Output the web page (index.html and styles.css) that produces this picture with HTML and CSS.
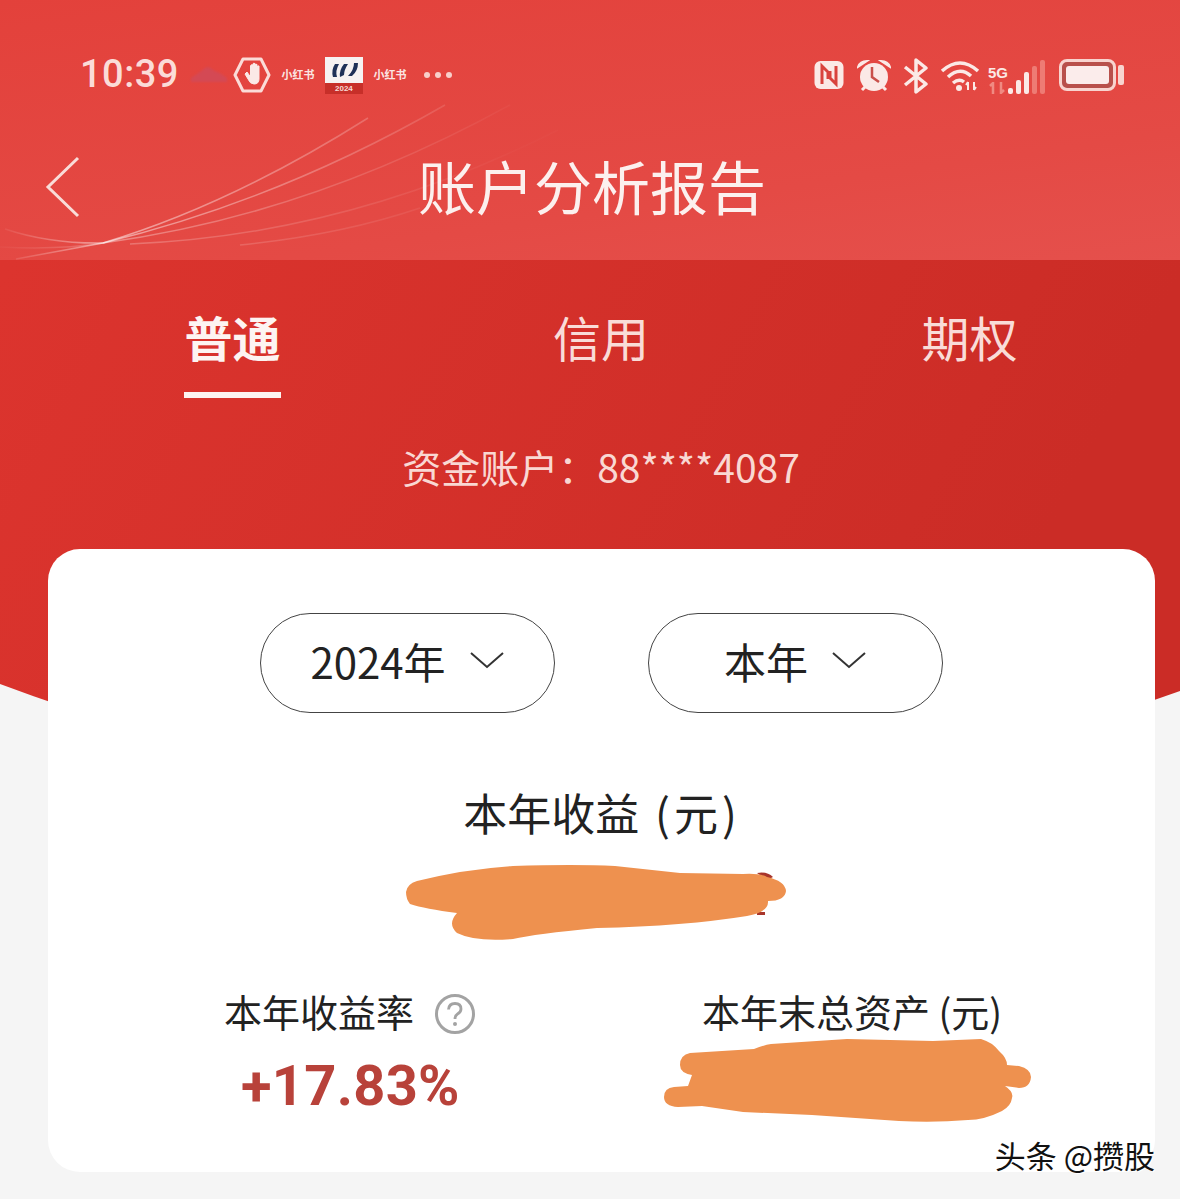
FILE: index.html
```html
<!DOCTYPE html>
<html lang="zh">
<head>
<meta charset="utf-8">
<title>账户分析报告</title>
<link rel="stylesheet" href="styles.css">
</head>
<body>
<div class="page">
  <svg class="hero-bg" viewBox="0 0 1180 800" width="1180" height="800" aria-hidden="true">
    <defs>
      <linearGradient id="heroGrad" x1="0" y1="0" x2="1" y2="0.35">
        <stop offset="0" stop-color="#de352f"/>
        <stop offset="1" stop-color="#cb2c26"/>
      </linearGradient>
    </defs>
    <path d="M0 684Q590 905 1180 691V0H0Z" fill="url(#heroGrad)"/>
  </svg>

  <header class="appbar">
    <svg class="swoosh" viewBox="0 0 1180 260" width="1180" height="260" aria-hidden="true">
      <defs>
        <linearGradient id="fadeR" gradientUnits="userSpaceOnUse" x1="60" y1="0" x2="520" y2="0">
          <stop offset="0" stop-color="#fff" stop-opacity=".55"/>
          <stop offset=".45" stop-color="#fff" stop-opacity=".32"/>
          <stop offset="1" stop-color="#fff" stop-opacity=".03"/>
        </linearGradient>
        <linearGradient id="fadeL" gradientUnits="userSpaceOnUse" x1="0" y1="0" x2="110" y2="0">
          <stop offset="0" stop-color="#fff" stop-opacity=".04"/>
          <stop offset="1" stop-color="#fff" stop-opacity=".5"/>
        </linearGradient>
      </defs>
      <g fill="none" stroke-width="1.500">
        <path d="M5 229Q50 244 103 243" stroke="url(#fadeL)"/>
        <path d="M16 259Q60 251 103 243" stroke="url(#fadeL)"/>
        <path d="M0 247Q60 250 103 243" stroke="url(#fadeL)" stroke-opacity=".5"/>
        <path d="M103 243Q230 205 368 118" stroke="url(#fadeR)"/>
        <path d="M103 243Q280 200 445 105" stroke="url(#fadeR)"/>
        <path d="M103 243Q310 215 510 105" stroke="url(#fadeR)" stroke-opacity=".7"/>
        <path d="M130 244Q350 235 558 130" stroke="url(#fadeR)" stroke-opacity=".5"/>
        <path d="M240 245Q340 235 420 208" stroke="url(#fadeR)" stroke-opacity=".45"/>
      </g>
    </svg>
    <div class="status">
      <div class="status-left">
        <span class="time">10:39</span>
        <svg class="ic-cloud" viewBox="0 0 36 20" width="36" height="20"><path d="M0 14Q8 9 14 4Q18 1 22 6Q30 9 36 14V18H0Z" fill="#d24a58"/></svg>
        <svg class="ic-hand" viewBox="0 0 38 36" width="38" height="36">
          <path d="M10 2H28L36 18L28 34H10L2 18Z" fill="none" stroke="#fbdcd8" stroke-width="3" stroke-linejoin="round"/>
          <path d="M12 17L15 22Q17 27 21 27Q26 27 26 22V11V9Q24.500 8 24 11V17V7.500Q22.500 6.500 22 8V17V6.500Q20 5.500 19.800 7.500V17V8Q18 7 17.500 9V20L14 15Z" fill="#fbe9e6" stroke="#fbe9e6"/>
        </svg>
        <span class="rednote rn-first">小红书</span>
        <span class="badge"><svg viewBox="0 0 38 26" width="38" height="26"><path d="M0 0H38V26H0Z" fill="#f6f2f2"/><path d="M10 7Q6 13 8 20L12 20Q10 14 14 7ZM19 7Q14 13 15 20L19 18Q19 13 23 7ZM29 6Q29 13 23 19L27 19Q33 14 33 6Z" fill="#1f3158"/></svg><span class="badge-year">2024</span></span>
        <span class="rednote rn-second">小红书</span>
        <span class="dots"><i></i><i></i><i></i></span>
      </div>
      <div class="status-right">
        <svg class="ic-nfc" viewBox="0 0 32 32" width="32" height="32">
          <rect x="1.500" y="2" width="29" height="28" rx="6" fill="#fbe9e6"/>
          <path d="M9 25V7L15 13V20M23 7V25L17 19V12" fill="none" stroke="#d9433d" stroke-width="3"/>
        </svg>
        <svg class="ic-alarm" viewBox="0 0 34 34" width="34" height="34">
          <circle cx="17" cy="18" r="14" fill="#fbe9e6"/>
          <path d="M1 8Q3 2 10 2ZM33 8Q31 2 24 2Z" fill="#fbe9e6" stroke="#fbe9e6" stroke-width="2"/>
          <path d="M5 31L8 28M29 31L26 28" stroke="#fbe9e6" stroke-width="3"/>
          <path d="M15 8V18L22 23" fill="none" stroke="#c9504a" stroke-width="2.500"/>
        </svg>
        <svg class="ic-bt" viewBox="0 0 26 36" width="26" height="36">
          <path d="M2 9L23 26L13 34V2L23 10L2 27" fill="none" stroke="#fbe9e6" stroke-width="3.500" stroke-linejoin="round"/>
        </svg>
        <svg class="ic-wifi" viewBox="0 0 40 34" width="40" height="34">
          <g fill="none" stroke="#fbe9e6" stroke-width="3.500">
            <path d="M2 13Q20 -3 38 13"/>
            <path d="M8 19Q20 8 31 18"/>
            <path d="M13 25Q19 20 24 24"/>
          </g>
          <circle cx="19" cy="30" r="3" fill="#fbe9e6"/>
          <path d="M28 32V24M26 27L28 24M34 24V32M34 32L36 29" fill="none" stroke="#fbe9e6" stroke-width="2"/>
        </svg>
        <div class="signal">
          <div class="net">
            <span class="net-5g">5G</span>
            <svg viewBox="0 0 20 12" width="20" height="12"><path d="M5 12V1L2 4M13 0V11L16 8" fill="none" stroke="#f08a82" stroke-width="2.500"/></svg>
          </div>
          <div class="bars">
            <i class="bar b1"></i><i class="bar b2"></i><i class="bar b3"></i><i class="bar b4 dim"></i><i class="bar b5 dim"></i>
          </div>
        </div>
        <div class="battery"><span class="battery-body"><span class="battery-fill"></span></span><span class="battery-cap"></span></div>
      </div>
    </div>
    <nav class="navbar">
      <svg class="back" viewBox="0 0 36 64" width="36" height="64"><path d="M33 3L3 32L33 61" fill="none" stroke="#f9dcd8" stroke-width="3"/></svg>
      <h1 class="title">账户分析报告</h1>
    </nav>
  </header>

  <section class="hero">
    <div class="tabs">
      <div class="tab tab-active">普通<span class="tab-line"></span></div>
      <div class="tab">信用</div>
      <div class="tab">期权</div>
    </div>
    <p class="account">资金账户：88****4087</p>
  </section>

  <main class="card">
    <div class="filters">
      <button class="pill">2024年<svg class="chev" viewBox="0 0 36 20" width="36" height="20"><path d="M2 3L18 17L34 3" fill="none" stroke="#333" stroke-width="2"/></svg></button>
      <button class="pill">本年<svg class="chev" viewBox="0 0 36 20" width="36" height="20"><path d="M2 3L18 17L34 3" fill="none" stroke="#333" stroke-width="2"/></svg></button>
    </div>
    <div class="income">
      <div class="income-label">本年收益 <span class="unit">(元)</span></div>
      <svg class="blob-a" viewBox="0 0 382 76" width="382" height="76" aria-hidden="true">
        <path d="M352 9Q362 7 368 13L362 16Z" fill="#a8352b"/><rect x="37" y="44" width="7" height="3" fill="#a8352b"/><rect x="352" y="48" width="8" height="3" fill="#a8352b"/>
        <path d="M1 28Q2 20 12 17Q60 5 108 2Q170 0 210 2L275 9L338 10Q355 9 362 13Q380 17 381 27Q380 37 363 37Q364 48 342 52Q280 62 192 64Q130 70 108 75Q70 78 52 69Q42 60 52 49Q20 45 5 40Q1 35 1 28Z" fill="#ee914f"/>
      </svg>
    </div>
    <div class="stats">
      <div class="stat stat-rate">
        <div class="stat-label">本年收益率<svg class="help" viewBox="0 0 42 42" width="42" height="42"><circle cx="21" cy="21" r="18.500" fill="none" stroke="#a3a3a3" stroke-width="3"/><path d="M14.500 16.500Q15 10.500 21 10.500Q27 10.500 27 16Q27 19 23.500 21Q21 22.500 21 26" fill="none" stroke="#a3a3a3" stroke-width="2.800"/><circle cx="21" cy="31" r="2" fill="#a3a3a3"/></svg></div>
        <div class="rate">+17.83%</div>
      </div>
      <div class="stat stat-assets">
        <div class="stat-label">本年末总资产 (元)</div>
        <svg class="blob-b" viewBox="0 0 368 84" width="368" height="84" aria-hidden="true">
          <path d="M16 27Q16 17 26 15L90 11Q100 7 107 6L183 1L269 3L317 1Q328 4 335 13Q343 20 343 27L355 28Q367 31 367 39Q366 50 355 50L341 48Q350 54 348 60Q347 68 338 73Q320 82 304 82Q270 85 235 83L148 77L79 74L38 68L14 69Q0 68 0 59Q0 50 10 49L24 48L28 37Q16 35 16 27Z" fill="#ee914f"/>
        </svg>
      </div>
    </div>
    <div class="watermark">头条 @攒股</div>
  </main>
</div>
</body>
</html>
```
FILE: styles.css
```css
* { box-sizing: border-box; }
html, body { margin: 0; padding: 0; }
body {
  background: #f5f5f5;
  font-family: "Noto Sans CJK SC", "Noto Sans", sans-serif;
}
.page {
  position: relative;
  width: 1180px;
  height: 1199px;
  overflow: hidden;
}
.hero-bg { position: absolute; left: 0; top: 0; }

.appbar {
  position: relative;
  height: 260px;
  background: linear-gradient(172deg, #e3413b 0%, #e44a45 70%, #e5504c 100%);
  overflow: hidden;
}
.swoosh { position: absolute; left: 0; top: 0; }

.status {
  position: relative;
  height: 147px;
  padding: 0 56px 0 80px;
  display: flex;
  justify-content: space-between;
  align-items: flex-start;
}
.status-left, .status-right { display: flex; align-items: flex-start; }
.status-left { padding-top: 52px; }
.status-right { padding-top: 59px; }
.time {
  font-family: Roboto, "Liberation Sans", sans-serif;
  font-size: 38px;
  line-height: 44px;
  font-weight: 500;
  letter-spacing: .5px;
  color: #fbdcd8;
}
.ic-cloud { margin: 12px 0 0 12px; opacity: .85; filter: blur(1px); }
.ic-hand { margin: 5px 0 0 6px; }
.rednote {
  width: 34px;
  margin-top: 13px;
  font-size: 11px;
  line-height: 18px;
  font-weight: 700;
  color: #fbe4e1;
  white-space: nowrap;
  text-align: center;
}
.rn-first { margin-left: 10px; }
.rn-second { margin-left: 10px; }
.badge {
  display: flex;
  flex-direction: column;
  width: 38px;
  height: 37px;
  margin: 5px 0 0 10px;
  background: #c72f29;
  overflow: hidden;
}
.badge svg { display: block; flex: none; }
.badge-year {
  font-family: "Liberation Sans", sans-serif;
  font-size: 8px;
  line-height: 11px;
  font-weight: 700;
  text-align: center;
  color: #f7d9d5;
}
.dots { display: flex; gap: 5px; margin: 20px 0 0 17px; }
.dots i { width: 6px; height: 6px; border-radius: 50%; background: #f8cfca; }

.status-right svg { display: block; flex: none; }
.ic-alarm { margin-left: 12px; }
.ic-bt { margin-left: 12px; margin-top: -1px; }
.ic-wifi { margin-left: 11px; margin-top: -1px; }
.signal { display: flex; align-items: flex-end; margin-left: 8px; height: 36px; margin-top: -1px; }
.net { display: flex; flex-direction: column; width: 20px; }
.net-5g {
  font-family: "Liberation Sans", sans-serif;
  font-size: 15px;
  line-height: 18px;
  font-weight: 700;
  color: #fbe9e6;
  white-space: nowrap;
}
.bars { display: flex; align-items: flex-end; gap: 3px; }
.bar { width: 5px; border-radius: 2px; background: #fbe9e6; }
.dim { background: #ee7b74; }
.b1 { height: 6px; }
.b2 { height: 14px; }
.b3 { height: 22px; }
.b4 { height: 28px; }
.b5 { height: 34px; }
.battery { display: flex; align-items: center; margin-left: 14px; height: 32px; }
.battery-body {
  display: block;
  width: 57px;
  height: 32px;
  padding: 4px;
  border: 3px solid #f8d4cf;
  border-radius: 8px;
  background: #b8504b;
}
.battery-fill { display: block; width: 100%; height: 100%; border-radius: 3px; background: #fbeceb; }
.battery-cap { width: 6px; height: 20px; margin-left: 2px; border-radius: 2px; background: #f8d4cf; }

.navbar {
  position: relative;
  height: 113px;
  display: flex;
  justify-content: center;
}
.back { position: absolute; left: 45px; top: 8px; }
.title {
  margin: 0 0 0 4px;
  font-size: 58px;
  line-height: 76px;
  font-weight: 400;
  color: #fcf0ee;
}

.hero {
  position: relative;
  height: 289px;
}
.tabs {
  display: grid;
  grid-template-columns: repeat(3, 97px);
  justify-content: space-between;
  padding: 0 162px 0 184px;
}
.tab {
  position: relative;
  height: 138px;
  padding-top: 42px;
  font-size: 48px;
  line-height: 68px;
  text-align: center;
  color: #f9dcd8;
  white-space: nowrap;
}
.tab-active { font-weight: 700; color: #fdf4f2; }
.tab-line {
  position: absolute;
  left: 0;
  right: 0;
  bottom: 0;
  height: 6px;
  background: #fdf4f2;
}
.account {
  margin: 40px 0 0 22px;
  font-size: 39px;
  line-height: 56px;
  text-align: center;
  color: #f9d8d3;
}

.card {
  position: relative;
  width: 1107px;
  height: 623px;
  margin-left: 48px;
  border-radius: 32px;
  background: #fff;
  color: #222;
}
.filters {
  display: flex;
  justify-content: center;
  gap: 93px;
  padding-top: 64px;
}
.pill {
  width: 295px;
  height: 100px;
  display: flex;
  justify-content: center;
  align-items: center;
  gap: 23px;
  border: 1px solid #444;
  border-radius: 50px;
  background: #fff;
  padding: 0 0 6px;
  font-family: inherit;
  font-size: 42px;
  color: #222;
}
.income { padding-top: 65px; }
.income-label {
  font-size: 44px;
  line-height: 68px;
  text-align: center;
  margin-right: -1px;
}
.unit { letter-spacing: 4px; margin-left: 6px; }
.blob-a { display: block; margin: 18px 0 0 357px; }
.stats { display: flex; margin-top: 43px; }
.stat-rate { width: 560px; padding-left: 176px; }
.stat-label {
  display: flex;
  align-items: center;
  font-size: 38px;
  line-height: 56px;
  white-space: nowrap;
}
.help { margin: 6px 0 0 20px; }
.rate {
  margin-top: 15px;
  margin-left: 17px;
  font-family: Roboto, "Liberation Sans", sans-serif;
  font-size: 56px;
  line-height: 64px;
  font-weight: 700;
  letter-spacing: .3px;
  color: #b8423a;
}
.stat-assets { padding-left: 94px; }
.blob-b { display: block; margin: -1px 0 0 -38px; }
.watermark {
  position: absolute;
  right: 0;
  bottom: -3px;
  font-size: 31px;
  line-height: 40px;
  color: #111;
  text-shadow: 1px 1px 0 #fff, -1px -1px 0 #fff;
  white-space: nowrap;
}
```
